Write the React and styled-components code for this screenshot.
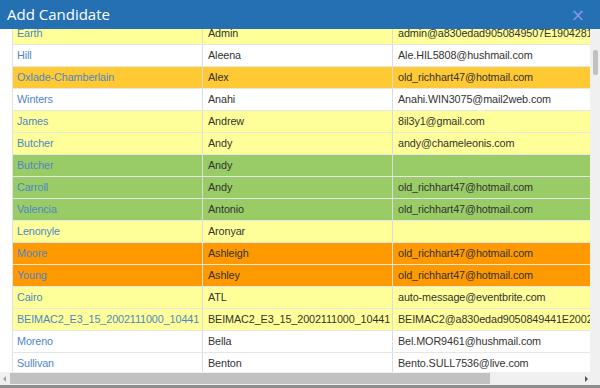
import styled, { createGlobalStyle } from 'styled-components';

const rows = [
  ['Earth', 'Admin', 'admin@a830edad9050849507E19042817', 'yellow'],
  ['Hill', 'Aleena', 'Ale.HIL5808@hushmail.com', 'white'],
  ['Oxlade-Chamberlain', 'Alex', 'old_richhart47@hotmail.com', 'amber'],
  ['Winters', 'Anahi', 'Anahi.WIN3075@mail2web.com', 'white'],
  ['James', 'Andrew', '8il3y1@gmail.com', 'yellow'],
  ['Butcher', 'Andy', 'andy@chameleonis.com', 'yellow'],
  ['Butcher', 'Andy', '', 'green'],
  ['Carroll', 'Andy', 'old_richhart47@hotmail.com', 'green'],
  ['Valencia', 'Antonio', 'old_richhart47@hotmail.com', 'green'],
  ['Lenonyle', 'Aronyar', '', 'yellow'],
  ['Moore', 'Ashleigh', 'old_richhart47@hotmail.com', 'orange'],
  ['Young', 'Ashley', 'old_richhart47@hotmail.com', 'orange'],
  ['Cairo', 'ATL', 'auto-message@eventbrite.com', 'yellow'],
  ['BEIMAC2_E3_15_2002111000_10441', 'BEIMAC2_E3_15_2002111000_10441', 'BEIMAC2@a830edad9050849441E20021', 'yellow'],
  ['Moreno', 'Bella', 'Bel.MOR9461@hushmail.com', 'white'],
  ['Sullivan', 'Benton', 'Bento.SULL7536@live.com', 'white'],
];

const tones = {
  white: '#ffffff',
  yellow: '#ffff99',
  amber: '#ffc933',
  green: '#99cc66',
  orange: '#ff9900',
};

const App = () => {
  return (
    <>
      <Global />
      <Dialog>
        <Header>
          <Title>Add Candidate</Title>
          <Close>×</Close>
        </Header>
        <Body>
          <Viewport>
            <Table>
              <tbody>
                {rows.map((r, i) => (
                  <Row key={i} $tone={tones[r[3]]}>
                    <NameCell>{r[0]}</NameCell>
                    <Cell>{r[1]}</Cell>
                    <Cell>{r[2]}</Cell>
                  </Row>
                ))}
              </tbody>
            </Table>
          </Viewport>
          <VScroll>
            <VThumb />
          </VScroll>
        </Body>
        <HScrollRow>
          <HScroll>
            <Arrow $dir="left" />
            <HThumb />
            <Arrow $dir="right" />
          </HScroll>
          <Corner />
        </HScrollRow>
        <BottomEdge />
      </Dialog>
    </>
  );
};

export default App;

const Global = createGlobalStyle`
  body {
    margin: 0;
    background: #ffffff;
  }
`;

const Dialog = styled.div`
  width: 600px;
  height: 388px;
  display: flex;
  flex-direction: column;
  overflow: hidden;
  background: #ffffff;
`;

const Header = styled.div`
  height: 29px;
  flex-shrink: 0;
  display: flex;
  align-items: center;
  justify-content: space-between;
  padding: 0 15px 0 7px;
  background: #2470b3;
`;

const Title = styled.div`
  font-family: "Open Sans", sans-serif;
  font-size: 15px;
  color: #ffffff;
  margin-top: -1px;
`;

const Close = styled.div`
  font-family: "DejaVu Sans", sans-serif;
  font-size: 17px;
  color: #8197e4;
  margin-top: 1px;
`;

const Body = styled.div`
  flex: 1;
  display: flex;
  min-height: 0;
`;

const Viewport = styled.div`
  flex: 1;
  overflow: hidden;
  padding-left: 12px;
`;

const Table = styled.table`
  border-collapse: collapse;
  table-layout: fixed;
  width: 600px;
  margin-top: -7px;
  font-family: "Liberation Sans", Tahoma, sans-serif;
  font-size: 10.8px;
  letter-spacing: -0.1px;
  color: #333333;
  border-left: 1px solid #e2e2e2;
`;

const Row = styled.tr`
  height: 22px;
  background: ${p => p.$tone};
`;

const Cell = styled.td`
  width: 190px;
  padding: 0 3px 0 5px;
  white-space: nowrap;
  overflow: hidden;
  border-bottom: 1px solid #e6e6e6;
  border-right: 1px solid #dcdcdc;
  box-sizing: border-box;

  &:last-child {
    width: 220px;
    border-right: none;
  }
`;

const NameCell = styled(Cell)`
  color: #4f86c6;
  padding-left: 4px;
`;

const VScroll = styled.div`
  width: 10px;
  flex-shrink: 0;
  background: #f0f0f0;
  padding-top: 21px;
  display: flex;
  justify-content: center;
`;

const VThumb = styled.div`
  width: 5px;
  height: 25px;
  border-radius: 2px;
  background: #c1c1c1;
`;

const HScrollRow = styled.div`
  height: 13px;
  flex-shrink: 0;
  display: flex;
`;

const HScroll = styled.div`
  flex: 1;
  display: flex;
  align-items: center;
  background: #f0f0f0;
  padding: 0 2px 0 3px;
`;

const HThumb = styled.div`
  width: 480px;
  height: 11px;
  margin-left: 4px;
  background: #c1c1c1;
`;

const Arrow = styled.div`
  width: 0;
  height: 0;
  border-top: 3px solid transparent;
  border-bottom: 3px solid transparent;
  ${p => p.$dir === 'left'
    ? 'border-right: 3px solid #a3a3a3;'
    : 'border-left: 3px solid #505050; margin-left: auto;'}
`;

const Corner = styled.div`
  width: 10px;
  background: #f0f0f0;
`;

const BottomEdge = styled.div`
  height: 3px;
  flex-shrink: 0;
  background: #8c8c8c;
`;
